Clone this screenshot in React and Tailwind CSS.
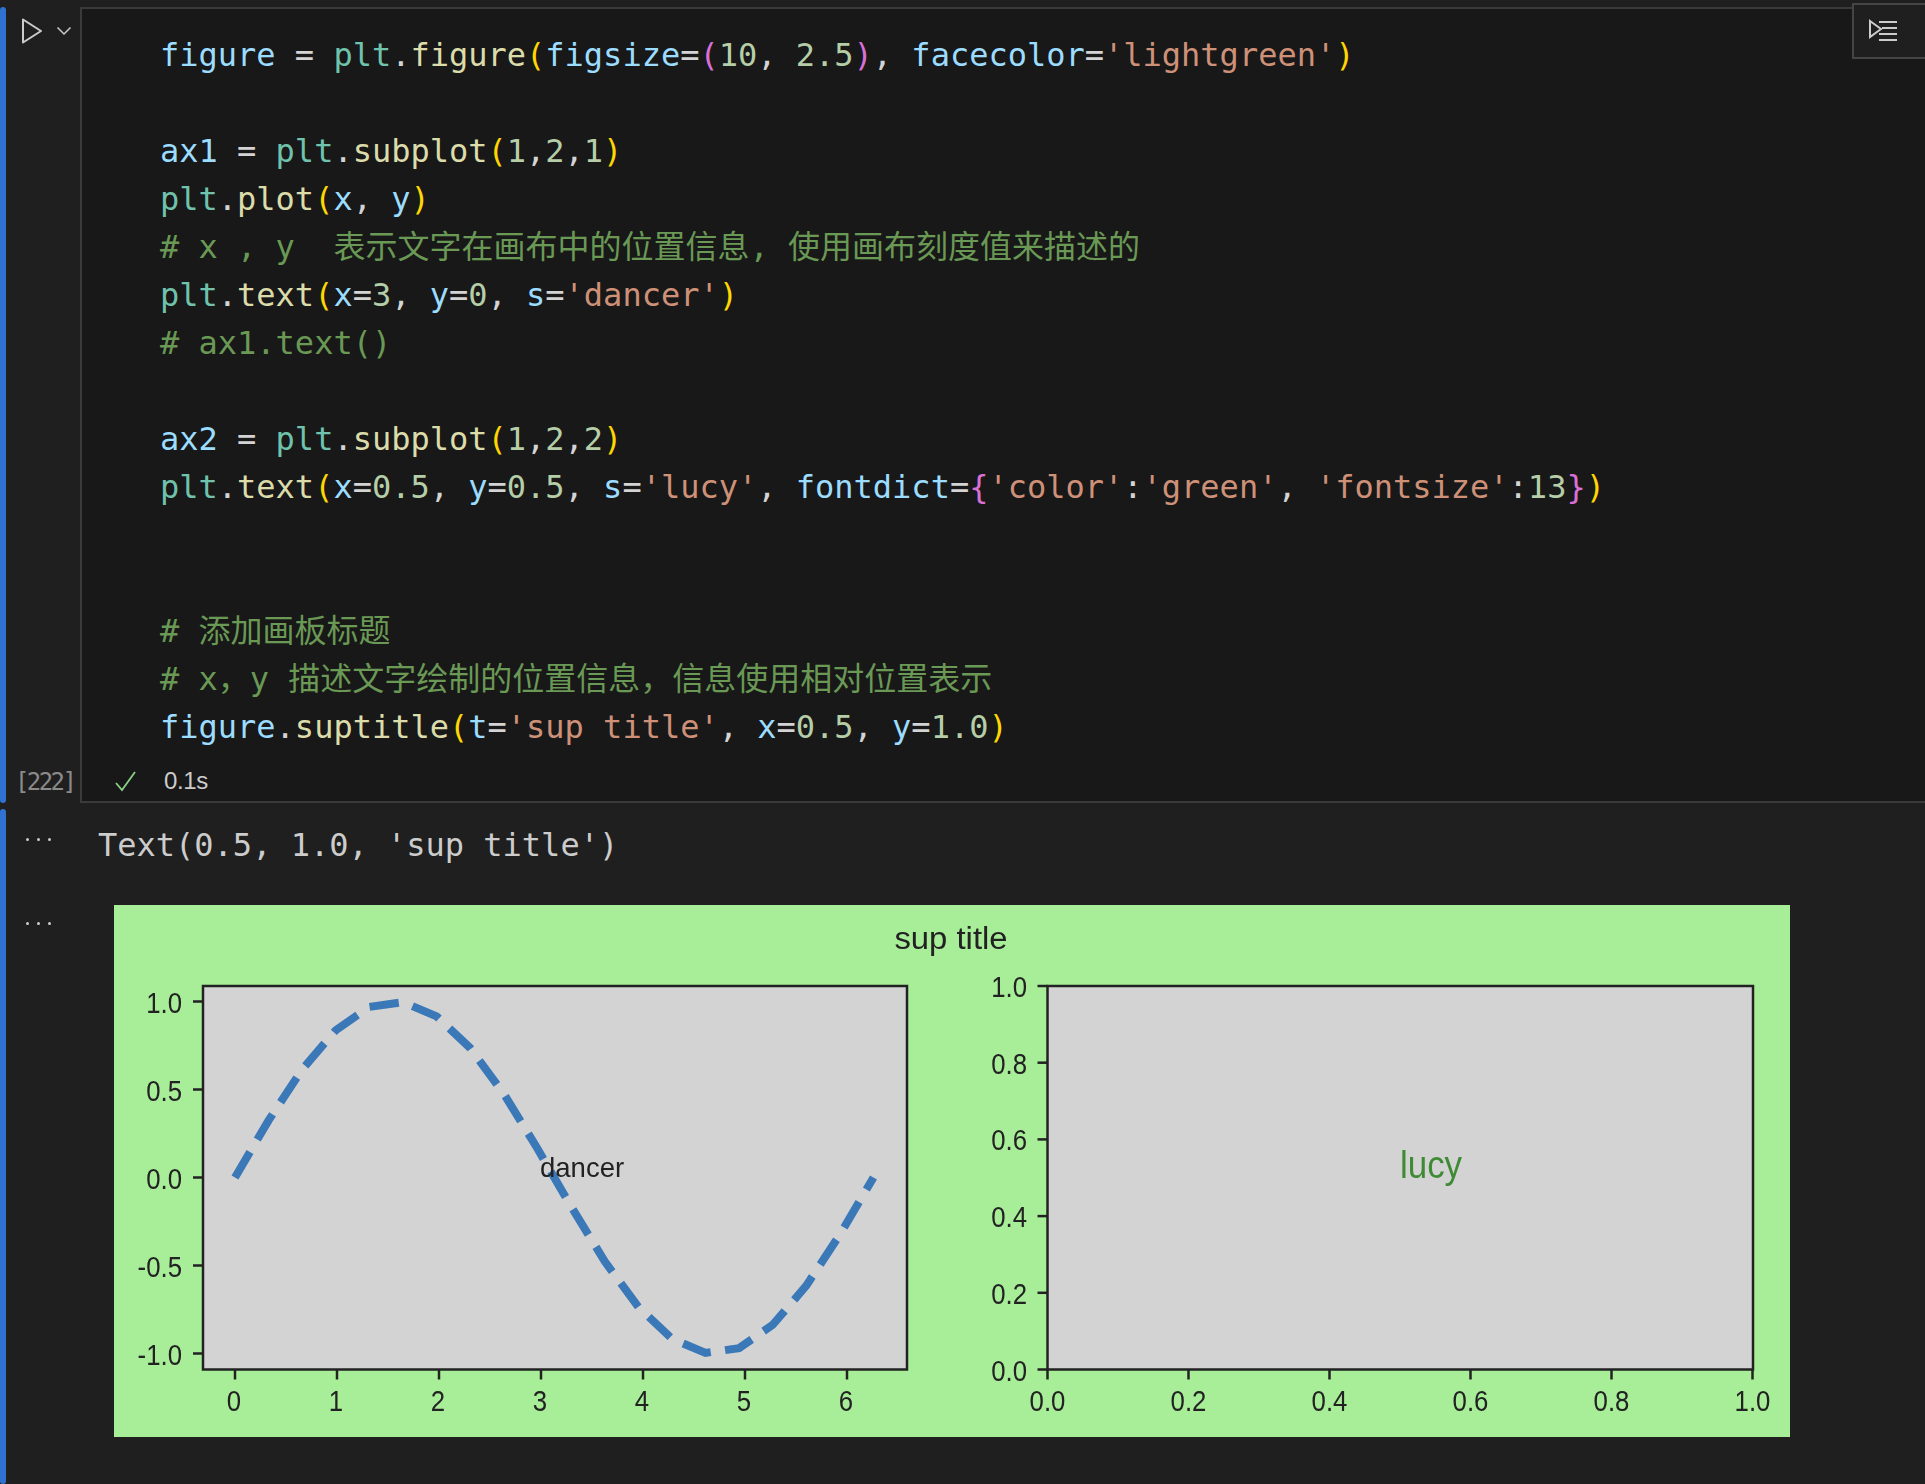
import React from 'react';

const v = 'text-[#9cdcfe]';
const c = 'text-[#6fc3ad]';
const f = 'text-[#dcdcaa]';
const o = 'text-[#d4d4d4]';
const y = 'text-[#ffd700]';
const p = 'text-[#da70d6]';
const n = 'text-[#b5cea8]';
const s = 'text-[#ce9178]';
const g = 'text-[#6a9955]';

const code = [
  [['figure', v], [' = ', o], ['plt', c], ['.', o], ['figure', f], ['(', y], ['figsize', v], ['=', o], ['(', p], ['10', n], [', ', o], ['2.5', n], [')', p], [', ', o], ['facecolor', v], ['=', o], ["'lightgreen'", s], [')', y]],
  [],
  [['ax1', v], [' = ', o], ['plt', c], ['.', o], ['subplot', f], ['(', y], ['1', n], [',', o], ['2', n], [',', o], ['1', n], [')', y]],
  [['plt', c], ['.', o], ['plot', f], ['(', y], ['x', v], [', ', o], ['y', v], [')', y]],
  [['# x , y  表示文字在画布中的位置信息, 使用画布刻度值来描述的', g]],
  [['plt', c], ['.', o], ['text', f], ['(', y], ['x', v], ['=', o], ['3', n], [', ', o], ['y', v], ['=', o], ['0', n], [', ', o], ['s', v], ['=', o], ["'dancer'", s], [')', y]],
  [['# ax1.text()', g]],
  [],
  [['ax2', v], [' = ', o], ['plt', c], ['.', o], ['subplot', f], ['(', y], ['1', n], [',', o], ['2', n], [',', o], ['2', n], [')', y]],
  [['plt', c], ['.', o], ['text', f], ['(', y], ['x', v], ['=', o], ['0.5', n], [', ', o], ['y', v], ['=', o], ['0.5', n], [', ', o], ['s', v], ['=', o], ["'lucy'", s], [', ', o], ['fontdict', v], ['=', o], ['{', p], ["'color'", s], [':', o], ["'green'", s], [', ', o], ["'fontsize'", s], [':', o], ['13', n], ['}', p], [')', y]],
  [],
  [],
  [['# 添加画板标题', g]],
  [['# x，y 描述文字绘制的位置信息，信息使用相对位置表示', g]],
  [['figure', v], ['.', o], ['suptitle', f], ['(', y], ['t', v], ['=', o], ["'sup title'", s], [', ', o], ['x', v], ['=', o], ['0.5', n], [', ', o], ['y', v], ['=', o], ['1.0', n], [')', y]],
];

const mono = 'font-["DejaVu_Sans_Mono","Noto_Sans_CJK_SC",monospace]';

function Dots() {
  return (
    <div className="flex gap-[8px]">
      <span className="w-[3px] h-[3px] rounded-full bg-[#cccccc]" />
      <span className="w-[3px] h-[3px] rounded-full bg-[#cccccc]" />
      <span className="w-[3px] h-[3px] rounded-full bg-[#cccccc]" />
    </div>
  );
}

function Label({ x, y, children, anchor = 'middle', size = 30, sx = 0.86, fill = '#222222' }) {
  return (
    <text
      transform={`translate(${x} ${y}) scale(${sx} 1)`}
      textAnchor={anchor}
      fontSize={size}
      fill={fill}
      fontFamily='"Liberation Sans", Arial, sans-serif'
    >
      {children}
    </text>
  );
}

function Figure() {
  const top = 986;
  const bottom = 1369.5;
  const sine = Array.from({ length: 20 }, (_, i) => {
    const t = (i * 2 * Math.PI) / 19;
    return `${(235 + (i / 19) * 638.5).toFixed(1)},${(1177.5 - Math.sin(t) * 176).toFixed(1)}`;
  }).join(' ');
  const leftY = [['1.0', 1001.5], ['0.5', 1089.5], ['0.0', 1177.5], ['-0.5', 1265.5], ['-1.0', 1353.5]];
  const leftX = [0, 1, 2, 3, 4, 5, 6];
  const rightTicks = ['0.0', '0.2', '0.4', '0.6', '0.8', '1.0'];

  return (
    <svg viewBox="114 905 1676 532" className="w-[1676px] h-[532px] block blur-[0.5px]">
      <rect x="114" y="905" width="1676" height="532" fill="#a8ee98" />
      <Label x={951} y={948.5} size={31} sx={1.06}>sup title</Label>

      {/* left axes */}
      <rect x="203" y={top} width="704" height={bottom - top} fill="#d3d3d3" />
      <polyline points={sine} fill="none" stroke="#3a78b8" strokeWidth="8" strokeDasharray="29.5 14.5" />
      <Label x={540} y={1177} anchor="start" size={27.5} sx={1}>dancer</Label>
      <rect x="203" y={top} width="704" height={bottom - top} fill="none" stroke="#222222" strokeWidth="2.5" />
      {leftY.map(([label, ty]) => (
        <g key={label}>
          <line x1="193" x2="203" y1={ty} y2={ty} stroke="#222222" strokeWidth="2.5" />
          <Label x={182} y={ty + 11} anchor="end">{label}</Label>
        </g>
      ))}
      {leftX.map((t) => (
        <g key={t}>
          <line x1={235 + t * 102} x2={235 + t * 102} y1={bottom} y2={bottom + 10} stroke="#222222" strokeWidth="2.5" />
          <Label x={234 + t * 102} y={1410.5}>{t}</Label>
        </g>
      ))}

      {/* right axes */}
      <rect x="1047.5" y={top} width="705.5" height={bottom - top} fill="#d3d3d3" stroke="#222222" strokeWidth="2.5" />
      <Label x={1431} y={1177.5} size={38} sx={0.92} fill="#3f8a35">lucy</Label>
      {rightTicks.map((label, i) => {
        const tx = 1047.5 + i * 141;
        const ty = bottom - i * 76.7;
        return (
          <g key={label}>
            <line x1={tx} x2={tx} y1={bottom} y2={bottom + 10} stroke="#222222" strokeWidth="2.5" />
            <Label x={tx} y={1410.5}>{label}</Label>
            <line x1="1037.5" x2="1047.5" y1={ty} y2={ty} stroke="#222222" strokeWidth="2.5" />
            <Label x={1027} y={ty + 11} anchor="end">{label}</Label>
          </g>
        );
      })}
    </svg>
  );
}

export default function App() {
  return (
    <div className="relative w-[1925px] h-[1484px] overflow-hidden bg-[#1f1f1f] pt-[7px] flex flex-col">
      {/* cell toolbar */}
      <div className="absolute left-[1852px] top-[3px] w-[90px] h-[56px] border-2 border-[#454545] bg-[#1f1f1f] flex items-center gap-[27px] pl-[14px]">
        <svg width="30" height="24" viewBox="0 0 30 24" fill="none" stroke="#cccccc" strokeWidth="2">
          <path d="M2 2 L13 10 L2 18 Z" />
          <path d="M11 3 H29 M14 9 H29 M11 15 H29 M11 21 H29" />
        </svg>
        <span className="w-[2px] h-[26px] bg-[#cccccc]" />
      </div>

      {/* code cell */}
      <div className="flex h-[796px] shrink-0">
        <div className="w-[6px] bg-[#2f72d2] rounded-[3px]" />
        <div className="w-[74px] flex flex-col justify-between">
          <div className="flex items-start pt-[11px] pl-[15px]">
            <svg width="22" height="26" viewBox="0 0 22 26" fill="none" stroke="#cccccc" strokeWidth="2">
              <path d="M2 1.5 L20 13 L2 24.5 Z" strokeLinejoin="round" />
            </svg>
            <svg className="ml-[13px] mt-[8px]" width="16" height="10" viewBox="0 0 16 10" fill="none" stroke="#cccccc" strokeWidth="1.5">
              <path d="M1.5 1.5 L8 8 L14.5 1.5" />
            </svg>
          </div>
          <div className={`${mono} text-[24px] leading-[30px] tracking-[-2.6px] text-[#8a8a8a] pl-[9px] pb-[6px]`}>[222]</div>
        </div>
        <div className="flex-1 bg-[#181818] border-2 border-r-0 border-[#3a3a3c] flex flex-col">
          <div className={`${mono} pt-[22px] pl-[78px] text-[32px] leading-[48px] whitespace-pre`}>
            {code.map((line, i) => (
              <div key={i} className="h-[48px]">
                {line.map(([text, color], j) => (
                  <span key={j} className={color}>{text}</span>
                ))}
              </div>
            ))}
          </div>
          <div className="flex items-center h-[30px] mt-[15px] pl-[32px]">
            <svg width="24" height="24" viewBox="0 0 24 24" fill="none" stroke="#89d185" strokeWidth="1.8">
              <path d="M2 14 L8 21 L21 3" />
            </svg>
            <span className="ml-[26px] text-[24px] tracking-[-0.4px] text-[#cccccc] font-['Liberation_Sans',sans-serif]">0.1s</span>
          </div>
        </div>
      </div>

      {/* output cell */}
      <div className="flex flex-1 mt-[6px]">
        <div className="w-[6px] bg-[#2f72d2] rounded-[3px]" />
        <div className="flex-1 flex flex-col">
          <div className="flex h-[96px]">
            <div className="w-[20px]" />
            <div className="pt-[29px]"><Dots /></div>
            <div className={`${mono} ml-[47px] mt-[12px] text-[32px] leading-[48px] text-[#cccccc] whitespace-pre`}>Text(0.5, 1.0, 'sup title')</div>
          </div>
          <div className="flex">
            <div className="w-[20px]" />
            <div className="pt-[17px]"><Dots /></div>
            <div className="ml-[63px]"><Figure /></div>
          </div>
        </div>
      </div>
    </div>
  );
}
